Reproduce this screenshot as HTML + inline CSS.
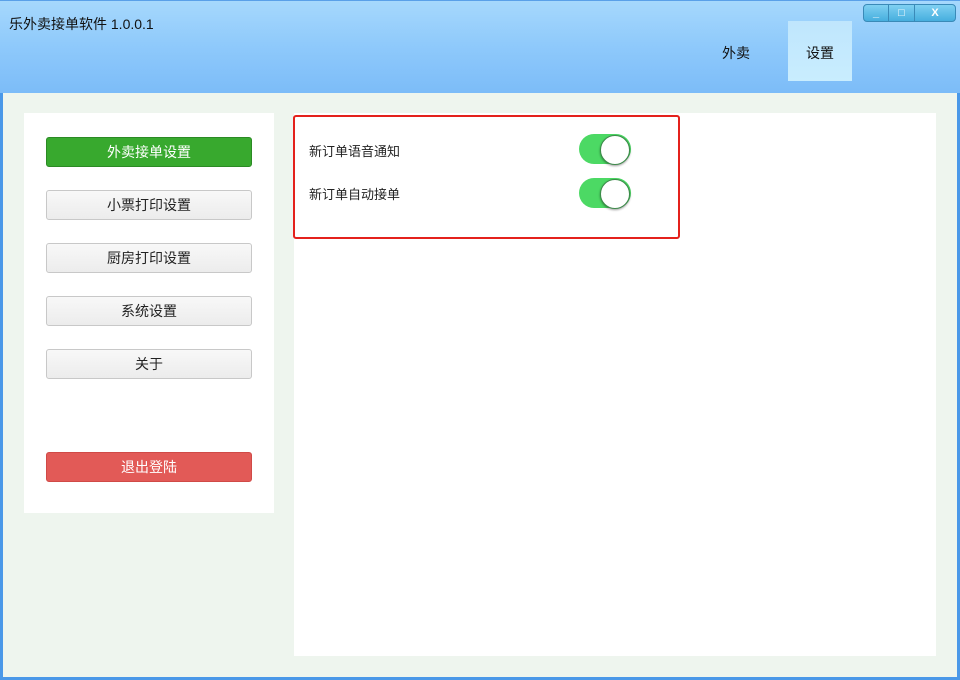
<!DOCTYPE html>
<html><head><meta charset="utf-8"><style>
*{margin:0;padding:0;box-sizing:border-box}
body{width:960px;height:680px;overflow:hidden;font-family:"Liberation Sans","Noto Sans CJK SC",sans-serif;font-size:14px;color:#222;background:#4a98e8;position:relative}
.win{position:absolute;left:3px;top:0;width:954px;height:677px;background:#eef5ee}
.hdr{position:absolute;left:0;top:0;width:960px;height:93px;background:linear-gradient(#a6d8fc,#8ec9fb 50%,#7cbcf8);border-top:1px solid #5aa0e8}
.title{position:absolute;left:9px;top:13px;font-size:14px;color:#111}
.tab{position:absolute;top:20px;width:64px;height:60px;line-height:64px;text-align:center;font-size:14px;color:#111}
.tab.on{background:linear-gradient(#bfe6fd,#c9edfe);}
.ctl{position:absolute;left:863px;top:3px;width:93px;height:18px;border:1px solid #3a8ab8;border-radius:4px;background:linear-gradient(#7fd0f2,#46aede);display:flex}
.ctl div{color:#fff;font-weight:bold;font-size:11px;text-align:center;line-height:16px;border-right:1px solid #3a8ab8}
.lp{position:absolute;left:24px;top:113px;width:250px;height:400px;background:#fff}
.rp{position:absolute;left:294px;top:113px;width:642px;height:543px;background:#fff}
.btn{position:absolute;left:46px;width:206px;height:30px;border:1px solid #c8c8c8;border-radius:3px;background:linear-gradient(#f8f8f8,#ececec);text-align:center;line-height:28px;font-size:14px;color:#222}
.red{position:absolute;left:293px;top:115px;width:387px;height:124px;border:2px solid #e4211c;border-radius:3px}
.lbl{position:absolute;left:309px;font-size:13px;color:#222}
.sw{position:absolute;left:579px;width:52px;height:30px;border-radius:15px;background:#4cd964}
.sw::after{content:"";position:absolute;right:1px;top:1px;width:28px;height:28px;border-radius:50%;background:#fff;box-shadow:0 1px 2px rgba(0,0,0,.4);border:1px solid #3d8a4a}
</style></head><body>
<div class="win"></div>
<div class="hdr">
<div class="title">乐外卖接单软件 1.0.0.1</div>
<div class="tab" style="left:704px">外卖</div>
<div class="tab on" style="left:788px">设置</div>
<div class="ctl"><div style="width:25px">_</div><div style="width:26px">□</div><div style="width:40px;border:none">X</div></div>
</div>
<div class="lp"></div>
<div class="btn" style="top:137px;background:#38a92e;border-color:#2b8a24;color:#fff">外卖接单设置</div>
<div class="btn" style="top:190px">小票打印设置</div>
<div class="btn" style="top:243px">厨房打印设置</div>
<div class="btn" style="top:296px">系统设置</div>
<div class="btn" style="top:349px">关于</div>
<div class="btn" style="top:452px;background:#e25a57;border-color:#d04a47;color:#fff">退出登陆</div>
<div class="rp"></div>
<div class="red"></div>
<div class="lbl" style="top:141px">新订单语音通知</div>
<div class="lbl" style="top:184px">新订单自动接单</div>
<div class="sw" style="top:134px"></div>
<div class="sw" style="top:178px"></div>
</body></html>
